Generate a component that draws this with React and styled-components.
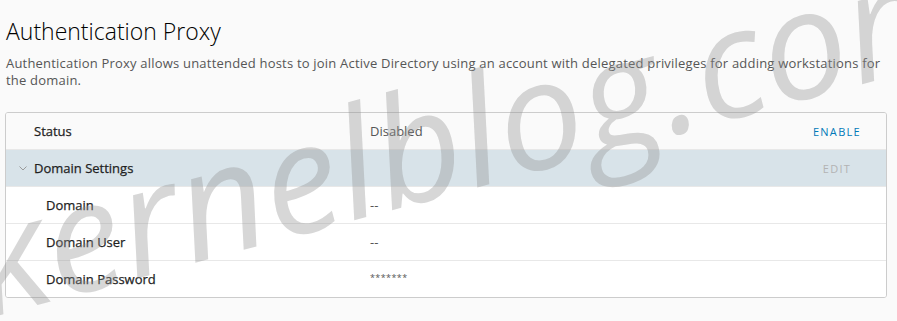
import React from "react";
import styled, { createGlobalStyle } from "styled-components";

const GlobalStyle = createGlobalStyle`
  html, body {
    margin: 0;
    padding: 0;
    background: #fafafa;
  }
  body {
    font-family: "Open Sans", "Liberation Sans", sans-serif;
    color: #313131;
  }
`;

const Page = styled.div`
  position: relative;
  width: 897px;
  height: 321px;
  overflow: hidden;
  box-sizing: border-box;
  padding: 16px 10px 0 5px;
`;

const Title = styled.h2`
  margin: 0 0 0 1px;
  font-size: 23px;
  font-weight: 300;
  line-height: 30px;
  color: #000;
`;

const Description = styled.p`
  margin: 9px 0 0 1px;
  font-size: 13px;
  line-height: 17px;
  letter-spacing: 0.2px;
  color: #565656;
`;

const Card = styled.div`
  margin-top: 23px;
  border: 1px solid #cccccc;
  border-radius: 3px;
  background: #fff;
  overflow: hidden;
`;

const Row = styled.div`
  display: grid;
  grid-template-columns: 364px 1fr auto;
  align-items: center;
  height: 36px;
  font-size: 13px;
  background: ${(p) =>
    p.$variant === "header" ? "#fafafa" : p.$variant === "group" ? "#d8e3e9" : "#fff"};
  border-bottom: ${(p) => (p.$last ? "none" : "1px solid #e8e8e8")};
`;

const Label = styled.div`
  display: flex;
  align-items: center;
  padding-left: ${(p) => p.$indent}px;
  font-weight: 500;
  color: #1f1f1f;
  -webkit-text-stroke: 0.25px #1f1f1f;
`;

const Chevron = styled.span`
  display: inline-flex;
  width: 15px;
  color: #9a9a9a;
`;

const Value = styled.div`
  color: #565656;
  font-size: ${(p) => (p.$small ? "9px" : "13px")};
  letter-spacing: ${(p) => (p.$small ? "0.4px" : "0")};
  transform: ${(p) => (p.$small ? "translateY(-2px)" : "none")};
`;

const ActionButton = styled.button`
  min-width: 72px;
  margin-right: 13px;
  padding: 0 12px;
  border: none;
  background: transparent;
  font-family: inherit;
  font-size: 11px;
  font-weight: 500;
  letter-spacing: 1.3px;
  text-transform: uppercase;
  color: ${(p) => (p.disabled ? "#b3b3b3" : "#0079b8")};
  cursor: ${(p) => (p.disabled ? "default" : "pointer")};
`;

const Watermark = styled.div`
  position: absolute;
  left: -8px;
  top: 184px;
  font-family: "Open Sans", sans-serif;
  font-style: italic;
  font-weight: 400;
  font-size: 152px;
  letter-spacing: 0.5px;
  line-height: 1;
  white-space: nowrap;
  color: rgba(143, 143, 143, 0.36);
  transform-origin: 0 100%;
  transform: rotate(-15deg);
  pointer-events: none;
`;

const settings = [
  { label: "Domain", value: "--" },
  { label: "Domain User", value: "--" },
  { label: "Domain Password", value: "*******", small: true },
];

export default function App() {
  return (
    <>
      <GlobalStyle />
      <Page>
        <Title>Authentication Proxy</Title>
        <Description>
          Authentication Proxy allows unattended hosts to join Active Directory using an account
          with delegated privileges for adding workstations for the domain.
        </Description>
        <Card>
          <Row $variant="header">
            <Label $indent={28}>Status</Label>
            <Value>Disabled</Value>
            <ActionButton>Enable</ActionButton>
          </Row>
          <Row $variant="group">
            <Label $indent={13}>
              <Chevron>
                <svg width="8" height="5" viewBox="0 0 8 5">
                  <path d="M0.5 0.5 L4 4 L7.5 0.5" fill="none" stroke="currentColor" strokeWidth="1" />
                </svg>
              </Chevron>
              Domain Settings
            </Label>
            <Value />
            <ActionButton disabled>Edit</ActionButton>
          </Row>
          {settings.map((s, i) => (
            <Row key={s.label} $last={i === settings.length - 1}>
              <Label $indent={40}>{s.label}</Label>
              <Value $small={s.small}>{s.value}</Value>
              <span />
            </Row>
          ))}
        </Card>
        <Watermark>kernelblog.com</Watermark>
      </Page>
    </>
  );
}
